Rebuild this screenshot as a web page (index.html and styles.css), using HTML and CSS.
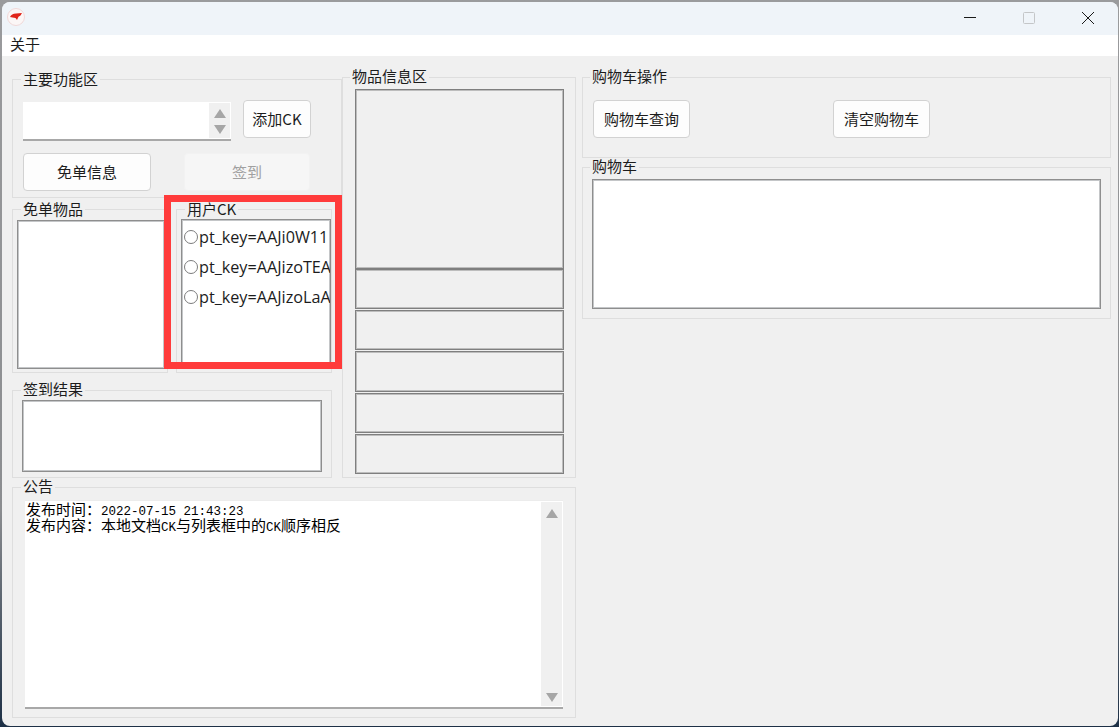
FILE: index.html
```html
<!DOCTYPE html>
<html lang="zh">
<head>
<meta charset="utf-8">
<title>免单工具</title>
<link rel="stylesheet" href="styles.css">
</head>
<body>
<div class="window">
  <header class="titlebar">
    <svg class="app-icon" width="18" height="18" viewBox="0 0 18 18">
      <circle cx="9" cy="9" r="8.5" fill="#fbf6f6" stroke="#f0d8d8"/>
      <path d="M3 9 C4 7 6 5.5 9 5.5 L15 5 L13.5 7.5 L11.5 8.8 L10 12 L8.5 10 L5.5 9.5 Z" fill="#e0251b"/>
    </svg>
    <div class="controls">
      <span class="ctl"><svg width="12" height="12" viewBox="0 0 12 12"><path d="M0 5.5H12" stroke="#1a1a1a"/></svg></span>
      <span class="ctl"><svg width="12" height="12" viewBox="0 0 12 12"><rect x=".5" y=".5" width="11" height="11" rx="1" fill="none" stroke="#c4c6c8"/></svg></span>
      <span class="ctl"><svg width="12" height="12" viewBox="0 0 12 12"><path d="M0 0L12 12M12 0L0 12" stroke="#1a1a1a"/></svg></span>
    </div>
  </header>
  <nav class="menubar">关于</nav>
  <main class="content">
    <div class="left">
      <div class="upper">
        <div class="stack">
          <fieldset class="group main-group">
            <legend class="plain">主要功能区</legend>
            <div class="main-body">
              <div class="row row-first">
                <div class="spinner">
                  <div class="spin-bar"><span class="arrow up"></span><span class="arrow down"></span></div>
                </div>
                <button class="btn btn-add">添加CK</button>
              </div>
              <div class="row row-second">
                <button class="btn btn-free">免单信息</button>
                <button class="btn btn-sign" disabled>签到</button>
              </div>
            </div>
          </fieldset>
          <div class="pair">
            <fieldset class="group half">
              <legend class="plain">免单物品</legend>
              <div class="listbox free-list"></div>
            </fieldset>
            <fieldset class="group half">
              <legend class="plain">用户CK</legend>
              <div class="listbox ck-list">
                <label class="radio-row"><span class="radio"></span><span class="ck-text">pt_key=AAJi0W11</span></label>
                <label class="radio-row"><span class="radio"></span><span class="ck-text">pt_key=AAJizoTEA</span></label>
                <label class="radio-row"><span class="radio"></span><span class="ck-text">pt_key=AAJizoLaA</span></label>
              </div>
            </fieldset>
          </div>
          <fieldset class="group sign-group">
            <legend>签到结果</legend>
            <div class="listbox sign-box"></div>
          </fieldset>
        </div>
        <fieldset class="group product">
          <legend class="tight">物品信息区</legend>
          <div class="panels">
            <div class="panel panel-big"></div>
            <div class="panel panel-a"></div>
            <div class="panel"></div>
            <div class="panel panel-tall"></div>
            <div class="panel"></div>
            <div class="panel"></div>
          </div>
        </fieldset>
      </div>
      <fieldset class="group notice">
        <legend>公告</legend>
        <div class="notice-box">
          <div class="notice-text">
            <div class="notice-line">发布时间：<span class="mono">2022-07-15 21:43:23</span></div>
            <div class="notice-line">发布内容：本地文档<span class="mono">CK</span>与列表框中的<span class="mono">CK</span>顺序相反</div>
          </div>
          <div class="notice-bar"><span class="arrow up"></span><span class="arrow down"></span></div>
        </div>
      </fieldset>
    </div>
    <div class="right">
      <fieldset class="group cart-ops">
        <legend class="tight">购物车操作</legend>
        <div class="ops-row">
          <button class="btn btn-cart">购物车查询</button>
          <button class="btn btn-cart">清空购物车</button>
        </div>
      </fieldset>
      <fieldset class="group cart">
        <legend class="tight">购物车</legend>
        <div class="listbox cart-box"></div>
      </fieldset>
    </div>
  </main>
  <div class="highlight"></div>
</div>
</body>
</html>
```

FILE: styles.css
```css
* { box-sizing: border-box; }
html, body { height: 100%; }
body {
  margin: 0;
  padding: 2px 1px 1px 2px;
  overflow: hidden;
  background: linear-gradient(to bottom, #9a9b9d 0%, #8b8d90 70%, #1d3046 100%);
  font: 15px/16px "Noto Sans CJK SC", "Noto Sans", sans-serif;
  color: #1c1c1c;
}
.window {
  position: relative;
  height: 724px;
  border-radius: 8px;
  overflow: hidden;
  background: #f0f0f0;
  display: flex;
  flex-direction: column;
}
.titlebar {
  height: 33px;
  background: #eff4f9;
  display: flex;
  align-items: center;
  justify-content: space-between;
  padding: 0 1px 0 5px;
}
.app-icon { display: block; margin-top: -4px; }
.controls { display: flex; }
.ctl {
  width: 59px;
  height: 33px;
  display: flex;
  align-items: center;
  justify-content: center;
  padding-bottom: 1px;
}
.menubar {
  height: 21px;
  background: #fff;
  padding-left: 8px;
  line-height: 17px;
}
.content {
  display: flex;
  gap: 6px;
  padding: 12px 0 0 10px;
}
.left { width: 564px; display: flex; flex-direction: column; }
.right { width: 529px; display: flex; flex-direction: column; }
.upper { display: flex; }
.stack { width: 330px; margin-top: 3px; display: flex; flex-direction: column; }

.group {
  margin: 0;
  padding: 0;
  min-width: 0;
  border: 1px solid #dedede;
}
.group legend {
  margin-left: 8px;
  padding: 0 2px 2px;
  line-height: 16px;
  background: #f0f0f0;
}
.group legend.plain { padding-bottom: 0; }
.group legend.tight { margin-left: 7px; }

.main-group { height: 127px; }
.main-body { padding: 13px 0 0 10px; }
.row { display: flex; }
.row-first { gap: 12px; }
.row-second { margin-top: 12px; gap: 33px; }

.spinner {
  width: 208px;
  height: 39px;
  margin-top: 2px;
  background: #fff;
  border-bottom: 2px solid #a8a8a8;
  display: flex;
  justify-content: flex-end;
  padding: 1px 1px 1px 0;
}
.spin-bar, .notice-bar {
  background: #f0f0f0;
  display: flex;
  flex-direction: column;
  align-items: center;
}
.spin-bar { width: 21px; padding-top: 6px; gap: 7px; }
.arrow { width: 0; height: 0; border-left: 6px solid transparent; border-right: 6px solid transparent; }
.arrow.up { border-bottom: 9px solid #a6a6a6; }
.arrow.down { border-top: 9px solid #a6a6a6; }

.btn {
  margin: 0;
  padding: 0;
  height: 38px;
  border: 1px solid #d2d2d2;
  border-radius: 4px;
  background: #fdfdfd;
  color: #1c1c1c;
  font: inherit;
}
.btn-add { width: 68px; }
.btn-free { width: 128px; }
.btn-sign { width: 126px; background: #f6f6f6; border-color: #f2f2f2; color: #a0a0a0; }
.btn-cart { width: 97px; }

.pair { display: flex; gap: 8px; margin-top: 3px; width: 320px; }
.half { width: 156px; height: 172px; }
.listbox { background: #fff; border: 1px solid #8e8e8e; box-shadow: inset 0 0 0 1px #c4c6c8; }
.free-list { width: 148px; height: 149px; margin: 3px 0 0 4px; }
.ck-list { width: 150px; height: 150px; margin: 2px 0 0 4px; padding-top: 2px; overflow: hidden; }
.radio-row { display: flex; align-items: center; height: 30px; padding-left: 2px; white-space: nowrap; }
.radio {
  flex: none;
  width: 14px;
  height: 14px;
  margin-right: 1px;
  border: 1px solid #7c7c7c;
  border-radius: 50%;
  background: #fff;
}
.ck-text { font-family: "Open Sans", "Noto Sans", sans-serif; font-size: 16.2px; }

.sign-group { width: 320px; height: 97px; margin-top: 8px; }
.sign-box { width: 300px; height: 72px; margin: 1px 0 0 9px; }

.product { width: 234px; height: 410px; }
.panels { display: flex; flex-direction: column; gap: 1px; padding: 3px 0 0 12px; }
.panel { width: 209px; height: 40px; border: 1px solid #7f7f7f; box-shadow: inset 0 0 0 1px #bdbdbd; background: #f0f0f0; }
.panel-big { height: 180px; }
.panel-a { margin-top: -1px; }
.panel-tall { height: 41px; }

.notice { width: 564px; height: 240px; }
.notice-box {
  width: 538px;
  height: 209px;
  margin: 4px 0 0 12px;
  background: #fff;
  border-top: 1px solid #ececec;
  border-bottom: 2px solid #a8a8a8;
  display: flex;
  justify-content: space-between;
}
.notice-text { padding-left: 1px; color: #000; }
.notice-line { height: 16px; line-height: 15px; }
.mono { font-family: "Liberation Mono", monospace; font-size: 12.5px; line-height: 12px; }
.notice-bar { width: 21px; margin: 1px 1px 1px 0; justify-content: space-between; padding: 7px 0 4px; }

.cart-ops { width: 529px; height: 90px; }
.ops-row { display: flex; gap: 143px; padding: 14px 0 0 10px; }
.cart { width: 529px; height: 161px; }
.cart-box { width: 509px; height: 130px; margin: 3px 0 0 9px; }

.highlight {
  position: absolute;
  left: 162px;
  top: 193px;
  width: 178px;
  height: 174px;
  border: 7px solid #ff3b3b;
}
```
